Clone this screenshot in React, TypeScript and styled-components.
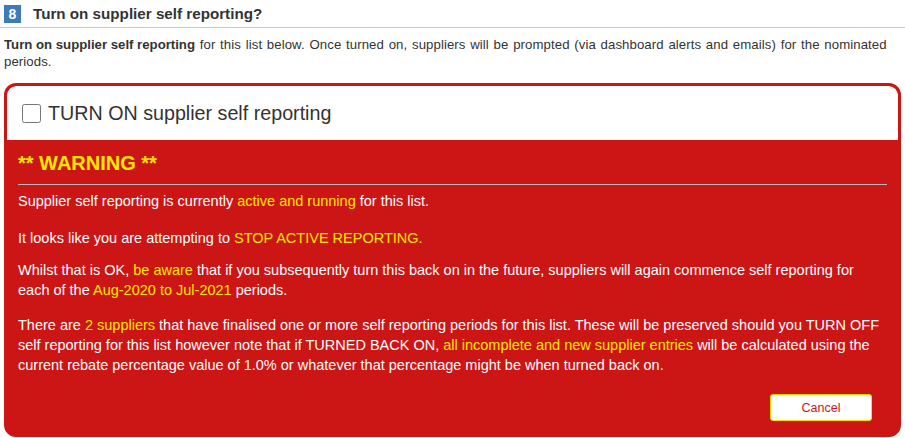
import React from "react";
import { styled, createGlobalStyle } from "styled-components";

const GlobalStyle = createGlobalStyle`
  html, body {
    margin: 0;
    padding: 0;
    background: #fff;
    font-family: "Liberation Sans", Arial, sans-serif;
    color: #333;
  }
`;

const Page = styled.div`
  width: 905px;
  height: 438px;
  overflow: hidden;
  box-sizing: border-box;
`;

const StepHead = styled.div`
  display: flex;
  align-items: center;
  gap: 12px;
  height: 28px;
  padding: 0 4px;
  border-bottom: 1px solid #c8c8c8;
  box-sizing: border-box;
`;

const Badge = styled.span`
  display: inline-flex;
  justify-content: center;
  align-items: center;
  width: 17px;
  height: 18px;
  background: #3d7ab8;
  color: #fff;
  font-weight: 700;
  font-size: 14px;
`;

const StepTitle = styled.h3`
  margin: 0;
  font-size: 15.2px;
  font-weight: 700;
  color: #333;
`;

const Intro = styled.p`
  margin: 8px 0 0;
  padding: 0 4px;
  font-size: 13.2px;
  letter-spacing: 0.08px;
  word-spacing: 1px;
  line-height: 17px;
  color: #333;

  b {
    font-weight: 700;
    letter-spacing: 0;
    word-spacing: 0;
  }
`;

const AlertBox = styled.div`
  margin: 13px 4px 0;
  border: 3px solid #cc1515;
  border-radius: 12px;
  background: #cc1515;
  overflow: hidden;
  height: 348px;
`;

const ToggleRow = styled.label`
  display: flex;
  align-items: center;
  gap: 7px;
  height: 54px;
  padding: 0 15px;
  background: #fff;
  border-top-left-radius: 9px;
  border-top-right-radius: 9px;
  font-size: 19.7px;
  color: #333;
  cursor: pointer;
`;

const Check = styled.input`
  width: 19px;
  height: 19px;
  margin: 0;
`;

const Warning = styled.div`
  padding: 12px 11px 13px;
  color: #fff;
  display: flex;
  flex-direction: column;
`;

const WarnTitle = styled.h2`
  margin: 0 0 6px;
  font-size: 20px;
  font-weight: 700;
  color: #ffe800;
  line-height: 23px;
  padding-bottom: 9px;
  border-bottom: 1px solid #b8b8b8;
`;

const Para = styled.p<{ $gap: number }>`
  margin: 0 0 ${(p) => p.$gap}px;
  font-size: 14.5px;
  line-height: 20px;
  color: #fff;
`;

const Hi = styled.span`
  color: #ffe800;
`;

const Actions = styled.div`
  display: flex;
  justify-content: flex-end;
  padding-right: 15px;
`;

const CancelButton = styled.button`
  width: 102px;
  height: 27px;
  background: #fff;
  border: 1px solid #ffd800;
  border-radius: 3px;
  color: #cc1515;
  font-family: "Liberation Sans", Arial, sans-serif;
  font-size: 12.5px;
  cursor: pointer;
`;

export default function App() {
  return (
    <Page>
      <GlobalStyle />
      <StepHead>
        <Badge>8</Badge>
        <StepTitle>Turn on supplier self reporting?</StepTitle>
      </StepHead>
      <Intro>
        <b>Turn on supplier self reporting</b> for this list below. Once turned on, suppliers will be prompted (via dashboard alerts and emails) for the nominated periods.
      </Intro>
      <AlertBox>
        <ToggleRow>
          <Check type="checkbox" />
          TURN ON supplier self reporting
        </ToggleRow>
        <Warning>
          <WarnTitle>** WARNING **</WarnTitle>
          <Para $gap={17}>
            Supplier self reporting is currently <Hi>active and running</Hi> for this list.
          </Para>
          <Para $gap={12}>
            It looks like you are attempting to <Hi>STOP ACTIVE REPORTING.</Hi>
          </Para>
          <Para $gap={15}>
            Whilst that is OK, <Hi>be aware</Hi> that if you subsequently turn this back on in the future, suppliers will again commence self reporting for each of the <Hi>Aug-2020 to Jul-2021</Hi> periods.
          </Para>
          <Para $gap={19}>
            There are <Hi>2 suppliers</Hi> that have finalised one or more self reporting periods for this list. These will be preserved should you TURN OFF self reporting for this list however note that if TURNED BACK ON, <Hi>all incomplete and new supplier entries</Hi> will be calculated using the current rebate percentage value of 1.0% or whatever that percentage might be when turned back on.
          </Para>
          <Actions>
            <CancelButton>Cancel</CancelButton>
          </Actions>
        </Warning>
      </AlertBox>
    </Page>
  );
}
